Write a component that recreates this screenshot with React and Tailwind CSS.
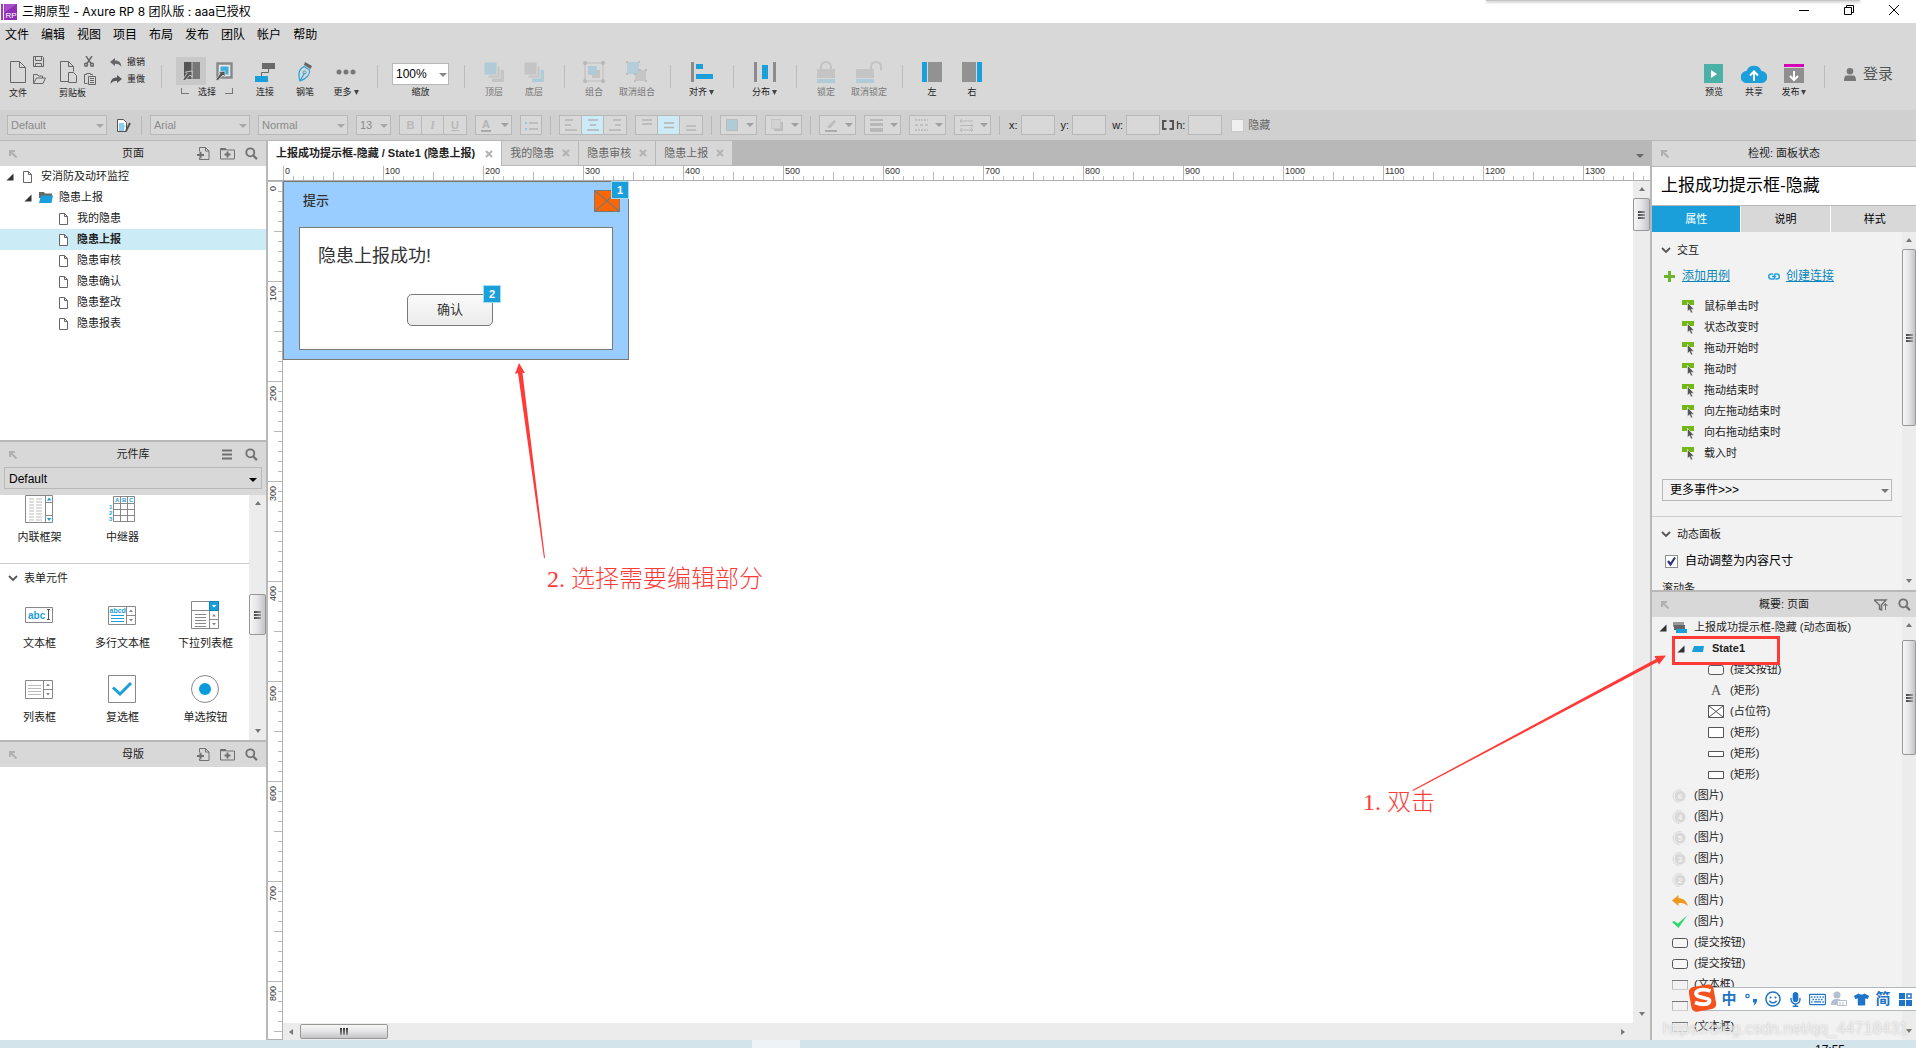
import React, { useState } from 'react';
import { FaMicrophone, FaRegKeyboard, FaRegSmile, FaTshirt } from 'react-icons/fa';

const pages = [
  { name: '安消防及动环监控', level: 0, icon: 'page', open: true },
  { name: '隐患上报', level: 1, icon: 'folder', open: true },
  { name: '我的隐患', level: 2, icon: 'page' },
  { name: '隐患上报', level: 2, icon: 'page', selected: true },
  { name: '隐患审核', level: 2, icon: 'page' },
  { name: '隐患确认', level: 2, icon: 'page' },
  { name: '隐患整改', level: 2, icon: 'page' },
  { name: '隐患报表', level: 2, icon: 'page' },
];

const outline = [
  { name: '上报成功提示框-隐藏 (动态面板)', level: 0, icon: 'panel', open: true },
  { name: 'State1', level: 1, icon: 'state', open: true, bold: true },
  { name: '(提交按钮)', level: 2, icon: 'button' },
  { name: '(矩形)', level: 2, icon: 'text' },
  { name: '(占位符)', level: 2, icon: 'placeholder' },
  { name: '(矩形)', level: 2, icon: 'rect' },
  { name: '(矩形)', level: 2, icon: 'thin' },
  { name: '(矩形)', level: 2, icon: 'low' },
  { name: '(图片)', level: 0, icon: 'num', num: 6 },
  { name: '(图片)', level: 0, icon: 'num', num: 4 },
  { name: '(图片)', level: 0, icon: 'num', num: 5 },
  { name: '(图片)', level: 0, icon: 'num', num: 3 },
  { name: '(图片)', level: 0, icon: 'num', num: 2 },
  { name: '(图片)', level: 0, icon: 'back' },
  { name: '(图片)', level: 0, icon: 'check' },
  { name: '(提交按钮)', level: 0, icon: 'button' },
  { name: '(提交按钮)', level: 0, icon: 'button' },
  { name: '(文本框)', level: 0, icon: 'field' },
  { name: '(文本框)', level: 0, icon: 'field' },
  { name: '(文本框)', level: 0, icon: 'field' },
];

const events = ['鼠标单击时', '状态改变时', '拖动开始时', '拖动时', '拖动结束时', '向左拖动结束时', '向右拖动结束时', '载入时'];
const menus = ['文件', '编辑', '视图', '项目', '布局', '发布', '团队', '帐户', '帮助'];
const indents = ['pl-[6px]', 'pl-[24px]', 'pl-[42px]'];
const ticks = [0, 1, 2, 3, 4, 5, 6, 7, 8, 9];

/* ---------- small shared icons ---------- */

const Caret = ({ className = 'text-[#a0a0a0]' }) => (
  <svg width="8" height="4" viewBox="0 0 8 4" className={`shrink-0 ${className}`}><path d="M0 0h8L4 4z" fill="currentColor" /></svg>
);

const Expander = () => (
  <svg width="8" height="8" viewBox="0 0 8 8"><path d="M7.5 0.5v7H.5z" fill="#333" /></svg>
);

const Chevron = () => (
  <svg width="10" height="7" viewBox="0 0 10 7" fill="none" stroke="#555" strokeWidth="1.8"><path d="M1 1l4 4 4-4" /></svg>
);

const SearchIcon = () => (
  <svg width="13" height="13" viewBox="0 0 13 13" fill="none" stroke="#707070">
    <circle cx="5.3" cy="5.3" r="4" strokeWidth="1.8" />
    <path d="M8.3 8.5l3.6 3.6" strokeWidth="2.2" />
  </svg>
);

const PopIcon = () => (
  <svg width="8" height="8" viewBox="0 0 8 8" fill="none" stroke="#b0b0b0" strokeWidth="2"><path d="M1 6V1h5M1 1l6.500 6.500" /></svg>
);

const AddPageIcon = () => (
  <svg width="13" height="13" viewBox="0 0 13 13" fill="none" stroke="#707070">
    <path d="M2.500 4.500V.5h6l3.500 3.500v8.500H2.500v-1.500M8.500.5V4H12" />
    <path d="M0 8h7M3.500 4.800v6.400" strokeWidth="2" />
  </svg>
);

const AddFolderIcon = () => (
  <svg width="15" height="13" viewBox="0 0 15 13" fill="none" stroke="#707070">
    <path d="M.5 12V1.500h5l1 1.500h8v9z" />
    <path d="M1 2.500h5" strokeWidth="1.500" />
    <path d="M4.500 7.500h6M7.500 4.500v6" strokeWidth="2" />
  </svg>
);

const PageIcon = () => (
  <svg width="9" height="12" viewBox="0 0 9 12" fill="#fff" stroke="#666"><path d="M.5.5h5l3 3v8h-8zM5.500.5v3h3" /></svg>
);

const FolderIcon = () => (
  <svg width="14" height="11" viewBox="0 0 14 11"><path d="M0 0h5l1 1.500h7V6H0z" fill="#666" /><path d="M2 3.500h12l-1.500 7.500H0z" fill="#1b9fdb" /></svg>
);

const CloseIcon = () => (
  <svg width="8" height="8" viewBox="0 0 8 8" stroke="#b4b4b4" strokeWidth="2.200"><path d="M1 1l6 6M7 1L1 7" /></svg>
);

/* ---------- layout helpers ---------- */

const PanelHeader = ({ title, children }) => (
  <div className="relative flex h-[25px] shrink-0 items-center justify-center bg-[#d8d8d8] text-[11px] text-[#222]">
    <button aria-label="弹出" className="absolute left-[9px]"><PopIcon /></button>
    <h2>{title}</h2>
    <div className="absolute right-[8px] flex items-center gap-[10px]">{children}</div>
  </div>
);

const ScrollBar = ({ thumb, className = 'w-[17px]' }) => (
  <div className={`flex shrink-0 flex-col items-center bg-[#ececec] ${className}`}>
    <div className="flex h-[16px] items-center"><svg width="6" height="4" viewBox="0 0 6 4"><path d="M3 0l3 4H0z" fill="#777" /></svg></div>
    <div className={`flex w-full shrink-0 items-center justify-center rounded-[2px] border border-[#979797] bg-linear-to-r from-[#f6f6f6] via-[#e4e4e6] to-[#c4c4c8] ${thumb}`}>
      <div className="flex flex-col gap-px">
        {[0, 1, 2].map((n) => <div key={n} className="h-[2px] w-[7px] bg-linear-to-r from-[#444] to-[#999]" />)}
      </div>
    </div>
    <div className="flex-1" />
    <div className="flex h-[18px] items-center"><svg width="6" height="4" viewBox="0 0 6 4"><path d="M0 0h6L3 4z" fill="#777" /></svg></div>
  </div>
);

const Sep = () => <div className="mt-[4px] mr-[9px] ml-[10px] h-[23px] w-px shrink-0 bg-[#bcbcbc]" />;
const BarSep = () => <div className="h-[19px] w-px shrink-0 bg-[#b8b8b8]" />;

const Tool = ({ label, more, disabled, wide = 'w-[40px]', children }) => (
  <button disabled={disabled} className={`flex shrink-0 flex-col items-center ${wide} ${disabled ? 'text-[#777]' : 'text-[#222]'}`}>
    <span className="flex h-[22px] items-center">{children}</span>
    <span className="mt-[3px] flex items-center gap-[2px] text-[9px] leading-[12px] whitespace-nowrap">
      {label}
      {more && <svg width="5" height="5" viewBox="0 0 5 5"><path d="M0 0h5L2.500 5z" fill="#444" /></svg>}
    </span>
  </button>
);

const FormatSelect = ({ label, value, width }) => (
  <label className={`relative shrink-0 ${width}`}>
    <select aria-label={label} disabled defaultValue={value} className="block h-[20px] w-full appearance-none border border-[#b8b8b8] bg-[#d8d8d8] pl-[3px] text-[11px] text-[#8a8a8a] opacity-100">
      <option>{value}</option>
    </select>
    <Caret className="pointer-events-none absolute top-[9px] right-[3px] text-[#a8a8a8]" />
  </label>
);

const FormatDrop = ({ label, children }) => (
  <button disabled aria-label={label} className="flex h-[20px] w-[37px] shrink-0 items-center justify-between border border-[#b8b8b8] bg-[#d8d8d8] pr-[2px] pl-[5px]">
    {children}
    <Caret />
  </button>
);

const Lines = ({ d }) => (
  <svg width="14" height="12" viewBox="0 0 14 12" stroke="#b4b4b4" strokeWidth="1.600"><path d={d} /></svg>
);

const ButtonRow = ({ items, active }) => (
  <div className="flex shrink-0 divide-x divide-[#b8b8b8] border border-[#b8b8b8]">
    {items.map(([name, icon], i) => (
      <button key={name} disabled aria-label={name} className={`flex h-[18px] w-[22px] items-center justify-center ${i === active ? 'bg-[#cdebf7]' : 'bg-[#d8d8d8]'}`}>
        {icon}
      </button>
    ))}
  </div>
);

const Coord = ({ name, gap }) => (
  <label className={`flex items-center gap-[3px] text-[11px] text-[#222] ${gap}`}>
    {name}:
    <input disabled className="h-[20px] w-[34px] border border-[#b8b8b8] bg-[#d8d8d8]" />
  </label>
);

/* ---------- rulers ---------- */

const TopRuler = () => (
  <div className="flex h-[15px] shrink-0 overflow-hidden border-b border-[#b0b0b0] bg-white pl-[15px]">
    {Array.from({ length: 14 }, (_, i) => (
      <div key={i} className="relative flex w-[100px] shrink-0 items-end">
        {ticks.map((t) => (
          <div key={t} className={`w-[10px] border-l border-[#b8b8b8] ${t === 0 ? 'h-[14px]' : t === 5 ? 'h-[8px]' : 'h-[4px]'}`} />
        ))}
        <span className="absolute top-0 left-[2px] text-[9px] leading-[11px] text-[#333]">{i * 100}</span>
      </div>
    ))}
  </div>
);

const SideRuler = () => (
  <div className="flex w-[15px] shrink-0 flex-col overflow-hidden border-r border-b border-[#b0b0b0] bg-white">
    {Array.from({ length: 9 }, (_, i) => (
      <div key={i} className="relative flex h-[100px] shrink-0 flex-col items-end">
        {ticks.map((t) => (
          <div key={t} className={`h-[10px] border-t border-[#b8b8b8] ${t === 0 ? 'w-[14px]' : t === 5 ? 'w-[8px]' : 'w-[4px]'}`} />
        ))}
        <span className="absolute top-[5px] left-0 rotate-180 text-[9px] leading-[11px] text-[#333] [writing-mode:vertical-rl]">{i * 100}</span>
      </div>
    ))}
  </div>
);

/* ---------- header ---------- */

const TitleBar = () => (
  <header className="relative flex h-[23px] shrink-0 items-center bg-white pl-px">
    <svg width="16" height="16" viewBox="0 0 16 16" className="shrink-0">
      <path d="M0 0h2v16H0zM3 0h1v16H3z" fill="#a13cc0" />
      <path d="M4 0h12v16H4z" fill="#8e2fb5" />
      <path d="M4 0h12L4 8z" fill="#a94fca" />
      <text x="4.500" y="14" fontSize="8" fill="#fff" fontFamily="Liberation Sans">RP</text>
    </svg>
    <h1 className="ml-[5px] font-['Inter','Noto_Sans_CJK_SC',sans-serif] text-[12px] leading-[20px] text-black">三期原型 - Axure RP 8 团队版 : aaa已授权</h1>
    <div className="absolute top-0 right-[56px] h-px w-[374px] bg-[#c4c4c4] shadow-[0_1px_3px_#888]" />
    <div className="mb-[3px] ml-auto flex items-center gap-[35px] pr-[17px]">
      <button aria-label="最小化"><svg width="10" height="10" viewBox="0 0 10 10"><path d="M0 5.500h10" stroke="#000" /></svg></button>
      <button aria-label="还原"><svg width="10" height="10" viewBox="0 0 10 10" fill="none" stroke="#000"><path d="M.5 2.500h7v7h-7zM2.500 2.500v-2h7v7h-2" /></svg></button>
      <button aria-label="关闭"><svg width="10" height="10" viewBox="0 0 10 10" stroke="#000"><path d="M0 0l10 10M10 0L0 10" /></svg></button>
    </div>
  </header>
);

const Toolbar = () => (
  <div className="flex h-[63px] shrink-0 items-start bg-[#d8d8d8] pt-[14px]">
    <div className="ml-[9px] w-[50px] shrink-0">
      <div className="flex h-[22px] gap-[7px] pl-px">
        <button aria-label="新建"><svg width="16" height="22" viewBox="0 0 16 22" fill="none" stroke="#666"><path d="M.5.5h9l6 6v15H.5zM9.500.5v6h6" /></svg></button>
        <div className="-mt-[5px] flex flex-col gap-[7px]">
          <button aria-label="保存"><svg width="11" height="11" viewBox="0 0 11 11" fill="none" stroke="#666"><path d="M.5.5h9l1 1v9H.5zM2.500.5v4h6v-4M2.500 10.500v-3h6v3" /></svg></button>
          <button aria-label="打开"><svg width="13" height="10" viewBox="0 0 13 10" fill="none" stroke="#666"><path d="M.5 9.500V.5h4l1 1.500h4v2M.5 9.500l3-5.500h9l-2.500 5.500z" /></svg></button>
        </div>
      </div>
      <p className="mt-[4px] text-[9px] leading-[12px] text-[#222]">文件</p>
    </div>
    <div className="w-[51px] shrink-0">
      <div className="flex h-[22px] gap-[7px] pl-px">
        <button aria-label="粘贴"><svg width="17" height="22" viewBox="0 0 17 22" fill="none" stroke="#666"><path d="M8 20.500H.5V.5h8l5 5v5M8.500.5v5h5M8.500 11.500h5l3 3v7h-8z" /></svg></button>
        <div className="-mt-[5px] flex flex-col gap-[6px]">
          <button aria-label="剪切"><svg width="10" height="11" viewBox="0 0 10 11" fill="none" stroke="#666" strokeWidth="1.400"><path d="M2 0l5 7.500M8 0L3 7.500" /><circle cx="2" cy="8.800" r="1.500" /><circle cx="8" cy="8.800" r="1.500" /></svg></button>
          <button aria-label="复制"><svg width="12" height="12" viewBox="0 0 12 12" fill="none" stroke="#666"><path d="M3.500 10.500H.5v-9h2v-1h4v1h2v1M4.500 3.500h7v8h-7zM6 5.500h4M6 7.500h4M6 9.500h4" /></svg></button>
        </div>
      </div>
      <p className="mt-[4px] text-[9px] leading-[12px] text-[#222]">剪贴板</p>
    </div>
    <div className="-mt-[5px] flex w-[41px] shrink-0 flex-col gap-[5px] text-[9px] leading-[12px] text-[#222]">
      <button className="flex items-center gap-[5px] whitespace-nowrap"><svg width="12" height="9" viewBox="0 0 12 9"><path d="M0 4l5-4v2.500c4 0 6 2 6.500 6.500C10 6.500 8 5.700 5 5.700V8z" fill="#666" /></svg>撤销</button>
      <button className="flex items-center gap-[5px] whitespace-nowrap"><svg width="12" height="9" viewBox="0 0 12 9"><path d="M12 4L7 0v2.500C3 2.500 1 4.500.5 9 2 6.500 4 5.700 7 5.700V8z" fill="#555" /></svg>重做</button>
    </div>
    <Sep />
    <div className="-mt-[4px] mr-[7px] ml-[5px] w-[62px] shrink-0">
      <div className="flex h-[28px] items-center gap-[9px]">
        <button aria-label="相交选择" className="flex h-[28px] w-[30px] items-center justify-center bg-[#c8c8c8]">
          <svg width="19" height="19" viewBox="0 0 19 19"><path d="M2 0h7.500v17H2z" fill="#555" /><path d="M10.500 0H18v17h-7.500z" fill="#777" /><path d="M10 9v6l-2-2-5 5.500L.5 18 5 11.500 3.500 10z" fill="#555" stroke="#ddd" strokeWidth=".8" /></svg>
        </button>
        <button aria-label="包含选择">
          <svg width="18" height="19" viewBox="0 0 18 19"><path d="M2.500 1.500h14v14h-14z" fill="#e8e8e8" stroke="#888" strokeWidth="2.400" /><path d="M5.500 4.500h8v8h-8z" fill="#3daee2" /><path d="M10 9v6l-2-2-5 5.500L.5 18 5 11.500 3.500 10z" fill="#555" stroke="#ddd" strokeWidth=".8" /></svg>
        </button>
      </div>
      <div className="mt-px flex h-[12px] items-center justify-between px-[5px] text-[9px] leading-[12px] text-[#222]">
        <span className="mb-[3px] h-[6px] w-[8px] border-b border-l border-[#777]" />
        选择
        <span className="mb-[3px] h-[6px] w-[8px] border-r border-b border-[#777]" />
      </div>
    </div>
    <Tool label="连接"><svg width="20" height="19" viewBox="0 0 20 19"><path d="M7 0h13v6H7z" fill="#6a6a6a" /><path d="M0 13h13v6H0z" fill="#1b9fdb" /><path d="M13.500 6v3.500h-7V13" fill="none" stroke="#666" /></svg></Tool>
    <Tool label="钢笔"><svg width="16" height="20" viewBox="0 0 16 20"><path d="M8 0l7 4-1.500 3L7 3z" fill="#666" /><path d="M7 4.500l5.500 3.500c.5 5-2 8-9.500 11C.8 12 2 7 7 4.500zM3 19l4.500-8" fill="none" stroke="#2ba3dc" strokeWidth="1.200" /><circle cx="7.500" cy="10.500" r="1.500" fill="none" stroke="#2ba3dc" /></svg></Tool>
    <Tool label="更多" more wide="w-[42px]"><svg width="20" height="6" viewBox="0 0 20 6" fill="#777"><circle cx="3" cy="3" r="2.500" /><circle cx="10" cy="3" r="2.500" /><circle cx="17" cy="3" r="2.500" /></svg></Tool>
    <Sep />
    <div className="flex w-[67px] shrink-0 flex-col items-center">
      <div className="relative mt-[2px] w-[57px]">
        <select id="zoom" defaultValue="100%" className="block h-[22px] w-full appearance-none border border-[#b8b8b8] bg-white pl-[3px] text-[12px] text-black"><option>100%</option></select>
        <Caret className="pointer-events-none absolute top-[10px] right-[2px] text-[#888]" />
      </div>
      <label htmlFor="zoom" className="mt-px text-[9px] leading-[12px] text-[#222]">缩放</label>
    </div>
    <Sep />
    <Tool label="顶层" disabled><svg width="20" height="20" viewBox="0 0 20 20"><path d="M8 8h12v12H8z" fill="#c4c4c4" /><path d="M4 4h12v12H4z" fill="#c4c4c4" stroke="#d8d8d8" /><path d="M0 0h13v13H0z" fill="#b0cbd8" stroke="#d8d8d8" /></svg></Tool>
    <Tool label="底层" disabled><svg width="20" height="20" viewBox="0 0 20 20"><path d="M8 8h12v12H8z" fill="#b0cbd8" /><path d="M4 4h12v12H4z" fill="#c4c4c4" stroke="#d8d8d8" /><path d="M0 0h13v13H0z" fill="#c4c4c4" stroke="#d8d8d8" /></svg></Tool>
    <Sep />
    <Tool label="组合" disabled><svg width="22" height="22" viewBox="0 0 22 22"><path d="M2 2h18v18H2z" fill="none" stroke="#bcbcbc" /><path d="M9 9h8v8H9z" fill="#c4c4c4" /><path d="M5 5h9v9H5z" fill="#b0cbd8" /><g fill="#b8b8b8"><circle cx="2" cy="2" r="2" /><circle cx="20" cy="2" r="2" /><circle cx="2" cy="20" r="2" /><circle cx="20" cy="20" r="2" /></g></svg></Tool>
    <Tool label="取消组合" disabled wide="w-[46px]"><svg width="22" height="22" viewBox="0 0 22 22"><path d="M9 9h11v11H9z" fill="#c6c6c6" /><path d="M1 1h12v12H1z" fill="#b4cdd9" /><g fill="#bcbcbc"><path d="M0 0h2v2H0zM12 0h2v2h-2zM0 12h2v2H0zM8 12h3v2H8zM19 8h2v2h-2zM8 19h2v2H8zM19 19h2v2h-2zM12 8h3v2h-3z" /></g></svg></Tool>
    <Sep />
    <Tool label="对齐" more wide="w-[43px]"><svg width="22" height="20" viewBox="0 0 22 20"><path d="M0 0h3v20H0z" fill="#8c8c8c" /><path d="M5 2h7v5H5zM5 12h17v5H5z" fill="#1b9fdb" /></svg></Tool>
    <Sep />
    <Tool label="分布" more wide="w-[43px]"><svg width="22" height="20" viewBox="0 0 22 20"><path d="M0 0h3v20H0zM19 0h3v20h-3z" fill="#8c8c8c" /><path d="M8 3h6v14H8z" fill="#1b9fdb" /></svg></Tool>
    <Sep />
    <Tool label="锁定" disabled><svg width="18" height="22" viewBox="0 0 18 22"><path d="M4 9V6a5 5 0 0110 0v3" fill="none" stroke="#c2c2c2" strokeWidth="2" /><path d="M0 8h18v9H0z" fill="#c4c4c4" /><path d="M0 18h18v4H0z" fill="#b0cbd8" /></svg></Tool>
    <Tool label="取消锁定" disabled wide="w-[46px]"><svg width="26" height="22" viewBox="0 0 26 22"><path d="M15 9V6a5 5 0 0110 0v3" fill="none" stroke="#c2c2c2" strokeWidth="2" /><path d="M0 8h18v9H0z" fill="#c4c4c4" /><path d="M0 18h18v4H0z" fill="#b0cbd8" /></svg></Tool>
    <Sep />
    <Tool label="左"><svg width="20" height="20" viewBox="0 0 20 20"><path d="M0 0h5v20H0z" fill="#1b9fdb" /><path d="M6 0h14v20H6z" fill="#929292" /></svg></Tool>
    <Tool label="右"><svg width="20" height="20" viewBox="0 0 20 20"><path d="M15 0h5v20h-5z" fill="#1b9fdb" /><path d="M0 0h14v20H0z" fill="#929292" /></svg></Tool>
    <div className="ml-auto flex pr-[23px]">
      <Tool label="预览"><svg width="19" height="19" viewBox="0 0 19 19" className="mt-[2px]"><path d="M0 0h19v19H0z" fill="#4bb0a5" /><path d="M7 6l6 4-6 4z" fill="#fff" /></svg></Tool>
      <Tool label="共享"><svg width="26" height="19" viewBox="0 0 26 19" className="mt-[2px]"><path d="M6 19a6 6 0 01-.5-12A8 8 0 0120.500 7 6 6 0 0120 19z" fill="#1b9fdb" /><path d="M13 17V8M9 11.500L13 7.500l4 4" fill="none" stroke="#fff" strokeWidth="2" /></svg></Tool>
      <Tool label="发布" more><svg width="20" height="19" viewBox="0 0 20 19" className="mt-[2px]"><path d="M0 0h20v3H0z" fill="#d602b8" /><path d="M0 4h20v15H0z" fill="#8f8f8f" /><path d="M10 7v9M6 12l4 4 4-4" fill="none" stroke="#fff" strokeWidth="2" /></svg></Tool>
      <Sep />
      <button className="ml-[10px] flex h-[27px] items-center gap-[7px] text-[15px] text-[#555]">
        <svg width="12" height="13" viewBox="0 0 12 13" fill="#777"><circle cx="6" cy="3.300" r="3.300" /><path d="M0 13c0-4 1-5.500 3-5.500h6c2 0 3 1.500 3 5.500z" /></svg>
        登录
      </button>
    </div>
  </div>
);

const FormatBar = () => (
  <div className="flex h-[31px] shrink-0 items-center gap-[8px] border-b border-[#b8b8b8] bg-[#d0d0d0] pl-[7px]">
    <FormatSelect label="样式" value="Default" width="w-[100px]" />
    <button aria-label="管理样式" className="mx-[2px]"><svg width="14" height="13" viewBox="0 0 14 13"><path d="M.5.5h6l3 3v9h-9z" fill="#fff" stroke="#555" /><path d="M2 5h5M2 7h6M2 9h5M2 11h5" stroke="#1b9fdb" /><path d="M13 4L9 12" stroke="#555" strokeWidth="2" /></svg></button>
    <BarSep />
    <FormatSelect label="字体" value="Arial" width="w-[100px]" />
    <FormatSelect label="字形" value="Normal" width="w-[90px]" />
    <FormatSelect label="字号" value="13" width="w-[35px]" />
    <ButtonRow
      items={[
        ['粗体', <b key="b" className="text-[11px] text-[#b8b8b8]">B</b>],
        ['斜体', <i key="i" className="font-['Liberation_Serif',serif] text-[12px] font-bold text-[#b8b8b8]">I</i>],
        ['下划线', <u key="u" className="text-[11px] font-bold text-[#b8b8b8]">U</u>],
      ]}
    />
    <FormatDrop label="文字颜色"><span className="border-b-2 border-[#a8a8a8] px-px text-[11px] leading-[12px] font-bold text-[#b4b4b4]">A</span></FormatDrop>
    <button disabled aria-label="项目符号" className="flex h-[20px] w-[22px] items-center justify-center border border-[#b8b8b8] bg-[#d8d8d8]">
      <svg width="13" height="9" viewBox="0 0 13 9"><path d="M0 1h2v2H0zM0 7h2v2H0z" fill="#98c4d8" /><path d="M4 2h9M4 8h9" stroke="#b4b4b4" strokeWidth="1.500" /></svg>
    </button>
    <BarSep />
    <ButtonRow
      active={1}
      items={[
        ['左对齐', <Lines key="l" d="M1 1h8M1 6h6M1 11h12" />],
        ['居中', <Lines key="c" d="M2 1h10M4 6h6M1 11h12" />],
        ['右对齐', <Lines key="r" d="M5 1h8M7 6h6M1 11h12" />],
      ]}
    />
    <ButtonRow
      active={1}
      items={[
        ['顶部对齐', <Lines key="t" d="M2 1h10M2 5h10" />],
        ['垂直居中', <Lines key="m" d="M2 4h10M2 8.500h10" />],
        ['底部对齐', <Lines key="b" d="M2 7h10M2 11h10" />],
      ]}
    />
    <BarSep />
    <FormatDrop label="填充"><svg width="12" height="12" viewBox="0 0 12 12"><path d="M.5.5h11v11H.5z" fill="#b0cbd8" stroke="#bbb" /></svg></FormatDrop>
    <FormatDrop label="阴影"><svg width="12" height="12" viewBox="0 0 12 12"><path d="M3 3h9v9H3z" fill="#bcbcbc" /><path d="M.5.5h9v9h-9z" fill="#d2d2d2" stroke="#c6c6c6" /></svg></FormatDrop>
    <BarSep />
    <FormatDrop label="线条颜色"><svg width="13" height="13" viewBox="0 0 13 13"><path d="M2 8l7-7 2 1.500-6 7z" fill="#bcbcbc" /><path d="M0 12h12" stroke="#acacac" strokeWidth="2" /></svg></FormatDrop>
    <FormatDrop label="线宽"><svg width="13" height="13" viewBox="0 0 13 13" fill="#b8b8b8"><path d="M0 0h13v2H0zM0 4h13v3H0zM0 9h13v4H0z" /></svg></FormatDrop>
    <FormatDrop label="线型"><svg width="13" height="12" viewBox="0 0 13 12" stroke="#b8b8b8" strokeWidth="1.500"><path d="M0 1h13" strokeDasharray="2 1" /><path d="M0 6h13" strokeDasharray="3 2" /><path d="M0 11h13" strokeDasharray="2 1" /></svg></FormatDrop>
    <FormatDrop label="箭头"><svg width="13" height="13" viewBox="0 0 13 13" fill="none" stroke="#b8b8b8"><path d="M0 2h13M2 0L0 2l2 2M0 6.500h13M11 4.500l2 2-2 2M0 11h13M2 9l-2 2 2 2M11 9l2 2-2 2" /></svg></FormatDrop>
    <BarSep />
    <div className="flex items-center pl-px">
      <Coord name="x" gap="" />
      <Coord name="y" gap="ml-[6px]" />
      <Coord name="w" gap="ml-[6px]" />
      <svg width="12" height="10" viewBox="0 0 12 10" fill="none" stroke="#555" strokeWidth="2" className="mr-[2px] ml-[2px]"><path d="M4.500 1H1v8h3.500M7.500 1H11v8H7.500" /></svg>
      <Coord name="h" gap="" />
      <label className="ml-[9px] flex items-center gap-[4px] text-[11px] text-[#666]">
        <input type="checkbox" disabled className="size-[13px] appearance-none border border-[#c8c8c8] bg-[#f0f0f0]" />
        隐藏
      </label>
    </div>
  </div>
);

/* ---------- left column ---------- */

const grey = { fill: '#fff', stroke: '#888' };

const WidgetItem = ({ label, children }) => (
  <button className="flex w-[83px] shrink-0 flex-col items-center text-[11px] leading-[16px] text-[#222]">
    <span className="flex h-[28px] items-center pr-[2px]">{children}</span>
    <span className="mt-[6px] whitespace-nowrap">{label}</span>
  </button>
);

const LeftColumn = () => (
  <aside className="flex w-[268px] shrink-0 flex-col border-r-2 border-[#b8b8b8] bg-white">
    <section className="flex h-[301px] shrink-0 flex-col border-b-2 border-[#b8b8b8]">
      <PanelHeader title="页面">
        <button aria-label="添加页面"><AddPageIcon /></button>
        <button aria-label="添加文件夹"><AddFolderIcon /></button>
        <button aria-label="搜索页面"><SearchIcon /></button>
      </PanelHeader>
      <ul>
        {pages.map((p, i) => (
          <li key={i} className={`flex h-[21px] items-center text-[11px] text-[#222] ${indents[p.level]} ${p.selected ? 'bg-[#cbebf7] font-bold' : ''}`}>
            <span className="w-[7px]">{p.open && <Expander />}</span>
            <span className="ml-[5px] flex w-[19px] justify-center">{p.icon === 'page' ? <PageIcon /> : <FolderIcon />}</span>
            <span className="ml-[4px]">{p.name}</span>
          </li>
        ))}
      </ul>
    </section>
    <section className="flex h-[300px] shrink-0 flex-col border-b-2 border-[#b8b8b8]">
      <PanelHeader title="元件库">
        <button aria-label="选项" className="mr-[3px]"><svg width="10" height="11" viewBox="0 0 10 11" stroke="#707070" strokeWidth="2"><path d="M0 1.500h10M0 5.500h10M0 9.500h10" /></svg></button>
        <button aria-label="搜索元件"><SearchIcon /></button>
      </PanelHeader>
      <div className="relative h-[28px] shrink-0 bg-[#d8d8d8] px-[4px]">
        <select aria-label="元件库" defaultValue="Default" className="block h-[22px] w-full appearance-none border border-[#b8b8b8] bg-[#d8d8d8] pt-px pl-[4px] text-[12px] text-black"><option>Default</option></select>
        <Caret className="pointer-events-none absolute top-[11px] right-[9px] text-black" />
      </div>
      <div className="flex min-h-0 flex-1">
        <div className="flex-1 overflow-hidden">
          <div className="-ml-[2px] flex">
            <WidgetItem label="内联框架">
              <svg width="28" height="28" viewBox="0 0 28 28" {...grey}><path d="M.5.5h27v27H.5zM20.500.5v27M20.500 7.500h7M20.500 20.500h7" /><path d="M4 4h5M11 4h6M4 7h5M11 7h6M4 10h5M11 10h6M4 13h5M11 13h6M4 16h5M11 16h6M4 19h5M11 19h6M4 22h5M11 22h6M4 25h5M11 25h6" stroke="#bbb" /><path d="M22 5.500l2-3 2.500 3zM22 23l2 3 2.500-3z" fill="#1b9fdb" stroke="none" /></svg>
            </WidgetItem>
            <WidgetItem label="中继器">
              <svg width="28" height="28" viewBox="0 0 28 28" {...grey}><path d="M5.500 1.500h21v25h-21zM5.500 8.500h21M5.500 14.500h21M5.500 20.500h21M12.500 1.500v25M19.500 1.500v25" /><g fill="#1b9fdb" stroke="none" fontSize="6" fontWeight="bold"><text x="7" y="7">A</text><text x="14" y="7">B</text><text x="21" y="7">C</text><text x="1" y="14">1</text><text x="1" y="20">2</text><text x="1" y="26">3</text></g></svg>
            </WidgetItem>
          </div>
          <h3 className="mt-[18px] flex h-[30px] items-center gap-[6px] border-t border-[#ccc] pl-[8px] text-[11px] text-[#222]"><Chevron />表单元件</h3>
          <div className="mt-[8px] -ml-[2px] flex">
            <WidgetItem label="文本框">
              <svg width="28" height="16" viewBox="0 0 28 16" {...grey}><path d="M.5.5h27v15H.5z" /><text x="3" y="12" fontSize="10" fontWeight="bold" fill="#1b9fdb" stroke="none">abc</text><path d="M22 2.500h3M23.500 2.500v10M22 12.500h3" stroke="#555" /></svg>
            </WidgetItem>
            <WidgetItem label="多行文本框">
              <svg width="28" height="19" viewBox="0 0 28 19" {...grey}><path d="M.5.5h27v18H.5zM18.500.5v18M18.500 9.500h9" /><text x="1.500" y="7" fontSize="7" fontWeight="bold" fill="#1b9fdb" stroke="none">abcd</text><path d="M3 9.500h13M3 12.500h13M3 15.500h13" stroke="#1b9fdb" /><path d="M21 6l2-2.500L25 6zM21 13l2 2.500 2-2.500z" fill="#888" stroke="none" /></svg>
            </WidgetItem>
            <WidgetItem label="下拉列表框">
              <svg width="28" height="28" viewBox="0 0 28 28" {...grey}><path d="M.5.5h27v27H.5zM18.500 9v19M.5 9.500h27M18.500 18.500h9" /><path d="M18.500.5h9v9h-9z" fill="#1b9fdb" stroke="#0d83bb" /><path d="M21 4l2 2.500L25.500 4z" fill="#fff" stroke="none" /><path d="M4 13.500h11M4 16.500h11M4 19.500h11M4 22.500h11M4 25.500h11" /><path d="M21 15.500l2-2.500 2 2.500zM21 22l2 2.500 2-2.500z" fill="#888" stroke="none" /></svg>
            </WidgetItem>
          </div>
          <div className="mt-[24px] -ml-[2px] flex">
            <WidgetItem label="列表框">
              <svg width="28" height="19" viewBox="0 0 28 19" {...grey}><path d="M.5.5h27v18H.5zM18.500.5v18M18.500 9.500h9" /><path d="M3 5.500h13M3 8.500h13M3 11.500h13M3 14.500h13" stroke="#bbb" /><path d="M21 6l2-2.500L25 6zM21 13l2 2.500 2-2.500z" fill="#888" stroke="none" /></svg>
            </WidgetItem>
            <WidgetItem label="复选框">
              <svg width="28" height="28" viewBox="0 0 28 28" {...grey}><path d="M.5.5h27v27H.5z" /><path d="M5 12.500l7 6.500L23 8" fill="none" stroke="#1b9fdb" strokeWidth="3" /></svg>
            </WidgetItem>
            <WidgetItem label="单选按钮">
              <svg width="28" height="28" viewBox="0 0 28 28" {...grey}><circle cx="14" cy="14" r="13.500" /><circle cx="14" cy="14" r="6" fill="#0a9bdc" stroke="none" /></svg>
            </WidgetItem>
          </div>
        </div>
        <ScrollBar thumb="mt-[83px] h-[41px]" />
      </div>
    </section>
    <section className="flex-1">
      <PanelHeader title="母版">
        <button aria-label="添加母版"><AddPageIcon /></button>
        <button aria-label="添加母版文件夹"><AddFolderIcon /></button>
        <button aria-label="搜索母版"><SearchIcon /></button>
      </PanelHeader>
    </section>
  </aside>
);

/* ---------- canvas ---------- */

const Badge = ({ children, className }) => (
  <span className={`absolute flex size-[18px] items-center justify-center border border-[#a4dcf4] bg-[#1b9fdb] text-[11px] leading-none font-bold text-white ${className}`}>{children}</span>
);

const Note = ({ n, children, className }) => (
  <p className={`absolute font-['Liberation_Serif','Noto_Sans_CJK_SC',serif] text-[24px] leading-[30px] font-light whitespace-nowrap text-[#ff3a37] ${className}`}>{n}. {children}</p>
);

const Canvas = () => (
  <main className="flex min-w-0 flex-1 flex-col">
    <nav className="flex h-[25px] shrink-0 items-stretch bg-[#b8b8b8] text-[11px]">
      <div className="flex items-center gap-[10px] bg-white pr-[8px] pl-[8px] font-bold text-[#222]">
        <a href="#state1">上报成功提示框-隐藏 / State1 (隐患上报)</a>
        <button aria-label="关闭标签"><CloseIcon /></button>
      </div>
      {['我的隐患', '隐患审核', '隐患上报'].map((t, i) => (
        <div key={i} className="flex w-[77px] items-center justify-between border-b border-l border-[#b8b8b8] bg-[#d8d8d8] px-[8px] text-[#666]">
          <a href="#tab">{t}</a>
          <button aria-label="关闭标签"><CloseIcon /></button>
        </div>
      ))}
      <button aria-label="全部标签" className="ml-auto pt-[4px] pr-[6px]"><Caret className="text-[#666]" /></button>
    </nav>
    <TopRuler />
    <div className="flex min-h-0 flex-1">
      <SideRuler />
      <div className="flex min-w-0 flex-1 flex-col">
        <div className="relative flex-1 overflow-hidden bg-white">
          <div className="absolute top-0 left-0 h-[179px] w-[346px] border border-[#797979] bg-[#99ccff]">
            <p className="absolute top-[9px] left-[19px] text-[13px] leading-[20px] font-medium text-[#333]">提示</p>
            <svg width="26" height="22" viewBox="0 0 26 22" className="absolute top-[8px] right-[8px]"><path d="M.5.5h25v21H.5z" fill="#ff6600" stroke="#797979" /><path d="M.5.5l25 21M25.500.5l-25 21" stroke="#797979" strokeWidth="1.200" /></svg>
            <Badge className="-top-px -right-px">1</Badge>
            <div className="absolute top-[45px] left-[15px] h-[123px] w-[314px] border border-[#797979] bg-white">
              <p className="absolute top-[15px] left-[18px] text-[18px] leading-[26px] text-[#333]">隐患上报成功!</p>
              <button className="absolute top-[66px] left-[107px] h-[32px] w-[86px] rounded-[5px] border border-[#797979] bg-linear-to-b from-[#fafafa] to-[#ebebeb] text-[13px] text-[#333]">确认</button>
              <Badge className="top-[57px] left-[183px]">2</Badge>
            </div>
          </div>
        </div>
        <div className="flex h-[17px] shrink-0 items-center bg-[#ececec] pr-[8px] pl-[6px]">
          <svg width="4" height="6" viewBox="0 0 4 6"><path d="M4 0v6L0 3z" fill="#777" /></svg>
          <div className="ml-[7px] flex h-[15px] w-[88px] items-center justify-center gap-px rounded-[2px] border border-[#979797] bg-linear-to-b from-[#f6f6f6] via-[#e4e4e6] to-[#c4c4c8]">
            {[0, 1, 2].map((n) => <div key={n} className="h-[7px] w-[2px] bg-linear-to-b from-[#333] to-[#999]" />)}
          </div>
          <svg width="4" height="6" viewBox="0 0 4 6" className="ml-auto"><path d="M0 0v6l4-3z" fill="#777" /></svg>
        </div>
      </div>
      <div className="flex w-[17px] shrink-0 flex-col bg-[#ececec] pb-[17px]">
        <ScrollBar thumb="mt-px h-[33px]" className="w-[17px] flex-1" />
      </div>
    </div>
  </main>
);

/* ---------- right column ---------- */

const EventIcon = () => (
  <svg width="13" height="13" viewBox="0 0 13 13"><path d="M0 0h12v5H8L5 2v3H0z" fill="#74b816" /><path d="M5.500 2.500v9l2-1.800L9 13l1.700-.8-1.500-3H12z" fill="#555" stroke="#f2f2f2" strokeWidth=".5" /></svg>
);

const OutlineIcon = ({ type, num }) => {
  switch (type) {
    case 'panel':
      return <svg width="14" height="11" viewBox="0 0 14 11"><path d="M0 0h11v5H0z" fill="#999" /><path d="M1 3h11v5H1z" fill="#666" /><path d="M3 7h11v4H3z" fill="#1b9fdb" /></svg>;
    case 'state':
      return <svg width="12" height="6" viewBox="0 0 12 6"><path d="M2 0h10l-1 6H0z" fill="#1b9fdb" /></svg>;
    case 'text':
      return <span className="font-['Liberation_Serif',serif] text-[14px] leading-none text-[#555]">A</span>;
    case 'placeholder':
      return <svg width="16" height="13" viewBox="0 0 16 13" fill="#fff" stroke="#555"><path d="M.5.5h15v12H.5zM.5.5l15 12M15.500.5l-15 12" /></svg>;
    case 'rect':
      return <svg width="16" height="11" viewBox="0 0 16 11" fill="#fff" stroke="#555"><path d="M.5.5h15v10H.5z" /></svg>;
    case 'thin':
      return <svg width="16" height="6" viewBox="0 0 16 6" fill="#fff" stroke="#555"><path d="M.5.5h15v5H.5z" /></svg>;
    case 'low':
      return <svg width="16" height="8" viewBox="0 0 16 8" fill="#fff" stroke="#555"><path d="M.5.5h15v7H.5z" /></svg>;
    case 'num':
      return <svg width="16" height="14" viewBox="0 0 16 14"><circle cx="8" cy="7" r="5.500" fill="#d8d8d8" /><circle cx="7.500" cy="7" r="6.500" fill="none" stroke="#d8d8d8" strokeDasharray="22 20" transform="rotate(90 7.500 7)" /><text x="8" y="10" textAnchor="middle" fontSize="8" fontWeight="bold" fill="#f4f4f4">{num}</text></svg>;
    case 'back':
      return <svg width="16" height="12" viewBox="0 0 16 12"><path d="M0 5.500L6.500 0v3c5 .3 8 3 9.500 8-3-2.600-5.500-3-9.500-3v3z" fill="#ee9a20" /></svg>;
    case 'check':
      return <svg width="16" height="13" viewBox="0 0 16 13"><path d="M0 7l2-1 4 2.500L15.500 0 6.500 13z" fill="#2fd96a" /></svg>;
    case 'field':
      return <svg width="16" height="10" viewBox="0 0 16 10" fill="none"><path d="M.5 10V.5h15V10" stroke="#bbb" /><path d="M0 .5h16" stroke="#777" /><path d="M0 9.500h16" stroke="#ccc" /></svg>;
    default:
      return <svg width="16" height="10" viewBox="0 0 16 10" fill="#f6f6f6" stroke="#555"><rect x=".5" y=".5" width="15" height="9" rx="2" /></svg>;
  }
};

const Inspector = () => {
  const [tab, setTab] = useState('属性');
  const [autoFit, setAutoFit] = useState(true);

  return (
    <section className="flex h-[451px] shrink-0 flex-col border-b-2 border-[#b8b8b8]">
      <PanelHeader title="检视: 面板状态" />
      <h3 className="h-[40px] shrink-0 border-y border-[#b8b8b8] bg-white pl-[9px] text-[17px] leading-[38px] text-black">上报成功提示框-隐藏</h3>
      <div className="-mr-[3px] flex h-[26px] shrink-0 gap-px bg-white text-[11px]">
        {['属性', '说明', '样式'].map((t) => (
          <button key={t} onClick={() => setTab(t)} className={`flex-1 ${tab === t ? 'bg-[#1b9fdb] text-white' : 'bg-[#d8d8d8] text-black'}`}>{t}</button>
        ))}
      </div>
      <div className="flex min-h-0 flex-1">
        <div className="min-w-0 flex-1 overflow-hidden pt-[6px] text-[11px] text-[#222]">
          <h4 className="flex h-[24px] items-center gap-[6px] pl-[9px]"><Chevron />交互</h4>
          <div className="flex h-[28px] items-center pl-[12px] text-[12px] text-[#0a86ba]">
            <svg width="11" height="11" viewBox="0 0 11 11" stroke="#6fb52c" strokeWidth="3"><path d="M0 5.500h11M5.500 0v11" /></svg>
            <a href="#add" className="ml-[7px] underline">添加用例</a>
            <svg width="12" height="7" viewBox="0 0 12 7" fill="none" stroke="#2ba3dc" strokeWidth="1.600" className="ml-[38px]"><path d="M8 3.500H4M5 1H3.200a2.400 2.400 0 000 5H5.500C8 6 5 1 7.500 1h1.300a2.400 2.400 0 010 5H7.500" /></svg>
            <a href="#link" className="ml-[6px] underline">创建连接</a>
          </div>
          <ul className="mt-[6px]">
            {events.map((e) => (
              <li key={e} className="flex h-[21px] items-center gap-[9px] pl-[30px]"><EventIcon />{e}</li>
            ))}
          </ul>
          <div className="relative mt-[15px] mr-[10px] ml-[10px]">
            <select aria-label="更多事件" className="block h-[22px] w-full appearance-none border border-[#b8b8b8] bg-[#f2f2f2] pl-[7px] text-[12px] text-black"><option>{'更多事件>>>'}</option></select>
            <Caret className="pointer-events-none absolute top-[10px] right-[3px] text-[#777]" />
          </div>
          <h4 className="mt-[15px] flex h-[35px] items-center gap-[6px] border-t border-[#ccc] pl-[9px]"><Chevron />动态面板</h4>
          <label className="flex h-[20px] items-center gap-[7px] pl-[13px] text-[12px] text-black">
            <span className="relative flex">
              <input type="checkbox" checked={autoFit} onChange={(e) => setAutoFit(e.target.checked)} className="size-[13px] appearance-none border border-[#8e8f8f] bg-white" />
              {autoFit && <svg width="9" height="9" viewBox="0 0 9 9" fill="none" stroke="#33337a" strokeWidth="2.200" className="pointer-events-none absolute top-[2px] left-[2px]"><path d="M1 4l2.500 3.500L8 .5" /></svg>}
            </span>
            自动调整为内容尺寸
          </label>
          <p className="mt-[9px] pl-[10px] leading-[16px]">滚动条</p>
        </div>
        <ScrollBar thumb="mt-px h-[177px]" className="w-[14px]" />
      </div>
    </section>
  );
};

const Outline = () => (
  <section className="flex min-h-0 flex-1 flex-col">
    <PanelHeader title="概要: 页面">
      <button aria-label="筛选"><svg width="14" height="12" viewBox="0 0 14 12" fill="none" stroke="#707070"><path d="M0 1h12L7.500 6v5l-2-1V6z" strokeWidth="1.500" /><path d="M11.500 11V5M9.500 7l2-2.500 2 2.500" /></svg></button>
      <button aria-label="搜索概要" className="-mr-[3px]"><SearchIcon /></button>
    </PanelHeader>
    <div className="flex min-h-0 flex-1">
      <ul className="min-w-0 flex-1 overflow-hidden pl-px">
        {outline.map((o, i) => (
          <li key={i} className={`flex h-[21px] items-center text-[11px] whitespace-nowrap text-[#222] ${indents[o.level]} ${o.bold ? 'font-bold' : ''}`}>
            <span className="w-[8px] shrink-0">{o.open && <Expander />}</span>
            <span className="ml-[4px] flex w-[18px] shrink-0 justify-center"><OutlineIcon type={o.icon} num={o.num} /></span>
            <span className="ml-[5px]">{o.name}</span>
          </li>
        ))}
      </ul>
      <ScrollBar thumb="mt-[7px] h-[115px]" className="w-[14px]" />
    </div>
  </section>
);

const ImeBar = () => (
  <div className="absolute right-0 bottom-[37px] flex h-[24px] items-center border-y border-l border-[#b4b8c0] bg-white text-[#1e74c8]">
    <svg width="28" height="28" viewBox="0 0 28 28" className="-mt-[3px] -ml-[12px] shrink-0">
      <rect x="1" y="1.500" width="25" height="25" rx="5" fill="#f4511e" transform="rotate(-10 14 14)" />
      <path d="M21.500 7C15 4.500 7 5.500 7 9.500c0 5 14 3.500 13.500 7.500-.5 4-8 4-14.500 1.500" fill="none" stroke="#fff" strokeWidth="3.800" />
    </svg>
    <div className="ml-px flex [&>*]:flex [&>*]:h-[22px] [&>*]:w-[22px] [&>*]:items-center [&>*]:justify-center">
      <button className="text-[15px] font-bold">中</button>
      <button aria-label="标点"><svg width="12" height="14" viewBox="0 0 12 14"><circle cx="2.500" cy="4" r="1.700" fill="none" stroke="currentColor" strokeWidth="1.200" /><path d="M8 7h4c.3 3-.8 5.500-4 6.500 1-1.200 1.500-2 1.500-3H8z" fill="currentColor" /></svg></button>
      <button aria-label="表情"><FaRegSmile size={16} /></button>
      <button aria-label="语音"><FaMicrophone size={15} /></button>
      <button aria-label="软键盘"><FaRegKeyboard size={17} /></button>
      <button aria-label="账户"><svg width="16" height="16" viewBox="0 0 16 16" fill="#b4c0d2"><circle cx="6" cy="4" r="3.500" /><path d="M0 14c0-5 2-6 6-6 2 0 3 .3 4 1v5z" /><path d="M6.500 9.500h9v5h-9z" fill="#fff" stroke="#b4c0d2" /><path d="M9 11v3M12 11v3" stroke="#b4c0d2" /></svg></button>
      <button aria-label="皮肤"><FaTshirt size={15} /></button>
      <button className="text-[15px] font-bold">简</button>
      <button aria-label="工具箱"><svg width="13" height="13" viewBox="0 0 13 13"><path d="M0 0h6v6H0zM0 7h6v6H0zM7 7h6v6H7z" fill="currentColor" /><path d="M8 1h4v4H8z" fill="none" stroke="currentColor" strokeWidth="1.500" /></svg></button>
    </div>
  </div>
);

export default function App() {
  return (
    <div className="relative flex h-screen w-full flex-col overflow-hidden bg-[#d8d8d8] font-['Liberation_Sans','Noto_Sans_CJK_SC',sans-serif]">
      <TitleBar />
      <nav className="flex h-[24px] shrink-0 items-center gap-[12px] bg-[#d8d8d8] pl-[5px] text-[12px] text-black">
        {menus.map((m) => <button key={m}>{m}</button>)}
      </nav>
      <Toolbar />
      <FormatBar />
      <div className="flex min-h-0 flex-1">
        <LeftColumn />
        <Canvas />
        <aside className="flex w-[266px] shrink-0 flex-col overflow-hidden border-l-2 border-[#b8b8b8] bg-[#f2f2f2]">
          <Inspector />
          <Outline />
        </aside>
      </div>
      <footer className="flex h-[8px] shrink-0 overflow-hidden bg-[#d4e4eb] text-[12px] text-black">
        <div className="ml-[752px] w-[48px] bg-[#edf3f6]" />
        <span className="mr-[71px] ml-auto pt-[4px] leading-[12px]">17:55</span>
      </footer>

      {/* annotations drawn over the workspace */}
      <svg width="32" height="200" viewBox="0 0 32 200" className="absolute top-[361px] left-[514px]">
        <path d="M5 2l6 10-2.500-.3L31 197l-1 .3L4 12 1 13z" fill="#ff3a37" />
      </svg>
      <Note n="2" className="top-[564px] left-[547px]">选择需要编辑部分</Note>
      <svg width="256" height="140" viewBox="0 0 256 140" className="absolute top-[653px] right-[248px]">
        <path d="M254 2.500l-7 9-1.500-2.500L1 138l-.5-1L244 6l-1.500-3z" fill="#ff3a37" />
      </svg>
      <Note n="1" className="top-[787px] right-[481px]">双击</Note>
      <div className="absolute top-[636px] right-[136px] h-[29px] w-[108px] border-3 border-[#ff3a37]" />
      <p className="absolute right-[8px] bottom-[6px] text-[16px] leading-[26px] whitespace-nowrap text-white/60 [text-shadow:0_0_2px_#bbb]">https://blog.csdn.net/qq_44718431</p>
      <ImeBar />
    </div>
  );
}
